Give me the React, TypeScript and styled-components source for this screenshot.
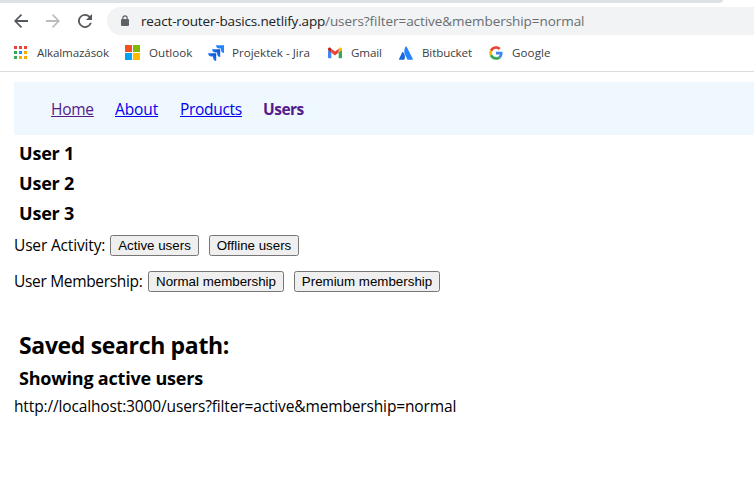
import React from 'react';
import styled, { createGlobalStyle } from 'styled-components';

const GlobalStyle = createGlobalStyle`
  *, *::before, *::after { box-sizing: border-box; }
  body { margin: 0; background: #fff; overflow: hidden; }
  h2, h3, p, ul { margin: 0; padding: 0; }
`;

const Window = styled.div`
  height: 484px;
  overflow: hidden;
  background: #fff;
  color: #000;
  font-family: "Segoe UI", "Open Sans", sans-serif;
`;

const TabStrip = styled.div`
  height: 3px;
  width: 723px;
  background: #dee1e6;
  border-bottom-right-radius: 4px 3px;
`;

const Toolbar = styled.div`
  display: flex;
  align-items: center;
  height: 36px;
  padding-left: 13px;
`;

const ToolIcon = styled.svg<{ $color: string }>`
  display: block;
  flex: none;
  width: 16px;
  height: 16px;
  margin-right: 16px;
  fill: ${p => p.$color};
`;

const AddressBar = styled.div`
  display: flex;
  align-items: center;
  flex: 1;
  height: 28px;
  margin-left: -2px;
  padding-left: 14px;
  border-radius: 14px 0 0 14px;
  background: #f1f3f4;
  font-size: 13.5px;
  line-height: 28px;
  white-space: nowrap;
`;

const Lock = styled.svg`
  width: 8px;
  height: 12px;
  margin-right: 12px;
  fill: #5f6368;
`;

const Host = styled.span`
  width: 184px;
  color: #202124;
  letter-spacing: -0.15px;
`;

const Path = styled.span`
  color: #6a6d71;
  letter-spacing: -0.06px;
`;

const Bookmarks = styled.div`
  display: flex;
  align-items: center;
  height: 33px;
  padding: 0 0 5px 13px;
  border-bottom: 1px solid #dadce0;
`;

const Bookmark = styled.div<{ $width: number; $spacing?: number }>`
  display: flex;
  align-items: center;
  flex: none;
  gap: 8px;
  width: ${p => p.$width}px;
  color: #3c4043;
  font-size: 11.6px;
  line-height: 18px;
  letter-spacing: ${p => p.$spacing ?? 0}px;
  white-space: nowrap;

  svg { display: block; flex: none; width: 16px; height: 16px; }
`;

const Page = styled.main`
  padding: 10px 0 0 14px;
  font-size: 15.5px;
  line-height: 22px;
`;

const Nav = styled.nav`
  display: flex;
  align-items: center;
  height: 53px;
  padding: 0 0 0 37px;
  background: #f0f8ff;
`;

const NavLink = styled.a<{ $width: number; $visited?: boolean; $active?: boolean; $spacing?: number }>`
  width: ${p => p.$width}px;
  color: ${p => (p.$visited ? '#551a8b' : '#0000ee')};
  font-weight: ${p => (p.$active ? 700 : 400)};
  letter-spacing: ${p => p.$spacing ?? 0}px;
  text-decoration: ${p => (p.$active ? 'none' : 'underline')};
  text-decoration-thickness: 1px;
  text-underline-offset: 1px;
  cursor: pointer;
`;

const UserList = styled.section`
  padding: 3px 0 0 5px;
`;

const Heading = styled.h3`
  height: 30px;
  font-size: 18px;
  font-weight: 700;
  line-height: 30px;
  letter-spacing: -0.2px;
`;

const Filters = styled.section`
  margin-top: -1px;
`;

const FilterRow = styled.div`
  display: flex;
  align-items: center;
  height: 36px;
`;

const FilterLabel = styled.span<{ $width: number; $spacing: number }>`
  width: ${p => p.$width}px;
  padding-bottom: 1px;
  letter-spacing: ${p => p.$spacing}px;
  white-space: nowrap;
`;

const FilterButton = styled.button<{ $width: number }>`
  width: ${p => p.$width}px;
  height: 21px;
  margin: 0 10px 0 0;
  padding: 0;
  border: 1px solid #767676;
  border-radius: 2.5px;
  background: #efefef;
  color: #000;
  font: 13.333px/19px "Liberation Sans", Arial, sans-serif;
  white-space: nowrap;
`;

const Saved = styled.section`
  padding-top: 29px;
`;

const SavedTitle = styled.h2`
  height: 35px;
  padding-left: 5px;
  font-size: 23px;
  font-weight: 700;
  line-height: 34px;
  letter-spacing: -0.34px;
`;

const SavedFilter = styled(Heading)`
  padding-left: 5px;
`;

const SavedPath = styled.p`
  line-height: 26px;
  letter-spacing: -0.14px;
`;

const dots = [
  ['#ea4335', '#ea4335', '#ea4335'],
  ['#34a853', '#1a90ff', '#fbab00'],
  ['#34a853', '#fbab00', '#fbab00'],
];

const AppsIcon = () => (
  <svg viewBox="0 0 16 16" shapeRendering="crispEdges">
    {dots.map((row, y) => row.map((c, x) => (
      <rect key={`${x}${y}`} x={1 + x * 5} y={1 + y * 5} width="3" height="3" fill={c} />
    )))}
  </svg>
);

const MicrosoftIcon = () => (
  <svg viewBox="0 0 16 16" shapeRendering="crispEdges">
    <path fill="#f25022" d="M0 0h7v7H0z" />
    <path fill="#7fba00" d="M8 0h7v7H8z" />
    <path fill="#00a4ef" d="M0 8h7v7H0z" />
    <path fill="#ffb900" d="M8 8h7v7H8z" />
  </svg>
);

const JiraIcon = () => (
  <svg viewBox="0 0 16 16">
    <defs>
      <linearGradient id="jira" x1="1" y1="0" x2="0" y2="1">
        <stop offset="0.2" stopColor="#0f5bd5" />
        <stop offset="0.75" stopColor="#2684ff" />
      </linearGradient>
    </defs>
    <path fill="url(#jira)" d="M0 8.200h8.200V16C6.300 15.800 5.100 14.600 5.100 13V11.500H3.400C1.600 11.500.2 10.200 0 8.200z" />
    <path fill="url(#jira)" d="M4 4.200h8.200V12C10.300 11.800 9.100 10.600 9.100 9V7.500H7.400C5.600 7.500 4.200 6.200 4 4.200z" />
    <path fill="#2684ff" d="M7.900.2H16V8C14.200 7.800 13 6.600 13 5V3.500H11.300C9.500 3.500 8.100 2.200 7.900.2z" />
  </svg>
);

const GmailIcon = () => (
  <svg viewBox="0 0 16 16">
    <path fill="#4285f4" d="M1 5v7.200c0 .7.500 1.100 1.100 1.100h2.200V6.900z" />
    <path fill="#34a853" d="M11.700 13.300h2.200c.7 0 1.100-.5 1.100-1.100V5l-3.300 2z" />
    <path fill="#fbbc04" d="M11.700 3.700v3.900L15 5.100V4c0-1.500-1.500-2-2.500-1.200z" />
    <path fill="#ea4335" d="M4.300 7.600V3.700L8 6.500l3.700-2.800v3.900L8 10.400z" />
    <path fill="#c5221f" d="M1 4v1.100l3.300 2.500V3.700l-.8-.9C2.500 2 1 2.500 1 4z" />
  </svg>
);

const AtlassianIcon = () => (
  <svg viewBox="0 0 16 16">
    <path fill="#1868db" d="M5.100 7.100c-.3-.3-.6-.2-.8.1L1 14c-.2.400 0 .7.400.7H6c.2 0 .4-.1.500-.3 1-2.100.4-5.300-1.400-7.300z" />
    <path fill="#2684ff" d="M7.700 1.500c-2 3.100-1.700 6.100-.5 8.600l2.200 4.300c.1.200.3.300.5.300h4.600c.4 0 .6-.4.4-.7L8.500 1.500c-.2-.4-.6-.4-.8 0z" />
  </svg>
);

const GoogleIcon = () => (
  <svg viewBox="-4 -4 56 56">
    <path fill="#EA4335" d="M24 9.500c3.540 0 6.710 1.220 9.210 3.600l6.850-6.850C35.900 2.380 30.470 0 24 0 14.620 0 6.510 5.380 2.560 13.220l7.980 6.190C12.430 13.720 17.740 9.500 24 9.500z" />
    <path fill="#4285F4" d="M46.980 24.550c0-1.570-.15-3.090-.38-4.550H24v9.020h12.940c-.58 2.960-2.260 5.480-4.780 7.180l7.730 6c4.510-4.180 7.090-10.360 7.090-17.650z" />
    <path fill="#FBBC05" d="M10.530 28.590A14.5 14.5 0 0 1 9.770 24c0-1.600.27-3.140.76-4.590l-7.980-6.190A23.900 23.900 0 0 0 0 24c0 3.880.92 7.540 2.560 10.780z" />
    <path fill="#34A853" d="M24 48c6.480 0 11.930-2.130 15.890-5.810l-7.730-6c-2.150 1.450-4.920 2.300-8.160 2.300-6.260 0-11.570-4.220-13.470-9.910l-7.980 6.190C6.510 42.620 14.620 48 24 48z" />
  </svg>
);

export default function App() {
  return (
    <Window>
      <GlobalStyle />
      <TabStrip />
      <Toolbar>
        <ToolIcon viewBox="0 0 16 16" $color="#54585d">
          <path d="M15 7.100H4.200l4.900-4.900L7.900 1 1 8l6.900 7 1.200-1.200-4.900-4.900H15z" />
        </ToolIcon>
        <ToolIcon viewBox="0 0 16 16" $color="#babcbe">
          <path d="M1 7.100h10.800L6.900 2.200 8.100 1 15 8l-6.900 7-1.200-1.200 4.900-4.900H1z" />
        </ToolIcon>
        <ToolIcon viewBox="0 0 16 16" $color="#54585d">
          <path d="M12.950 3.050A7 7 0 1 0 14.780 9.750H12.900A5.200 5.200 0 1 1 11.700 4.300L9 7h6V1z" />
        </ToolIcon>
        <AddressBar>
          <Lock viewBox="0 0 8 12">
            <path fillRule="evenodd" d="M1.300 4V2.900a2.700 2.700 0 0 1 5.400 0V4H7a1 1 0 0 1 1 1v5a1 1 0 0 1-1 1H1a1 1 0 0 1-1-1V5a1 1 0 0 1 1-1zm1.200 0h3V2.900a1.500 1.500 0 0 0-3 0z" />
          </Lock>
          <Host>react-router-basics.netlify.app</Host>
          <Path>/users?filter=active&amp;membership=normal</Path>
        </AddressBar>
      </Toolbar>
      <Bookmarks>
        <Bookmark $width={112} $spacing={-0.12}><AppsIcon />Alkalmazások</Bookmark>
        <Bookmark $width={83}><MicrosoftIcon />Outlook</Bookmark>
        <Bookmark $width={119}><JiraIcon />Projektek - Jira</Bookmark>
        <Bookmark $width={71} $spacing={-0.12}><GmailIcon />Gmail</Bookmark>
        <Bookmark $width={90} $spacing={-0.12}><AtlassianIcon />Bitbucket</Bookmark>
        <Bookmark $width={70} $spacing={0.1}><GoogleIcon />Google</Bookmark>
      </Bookmarks>
      <Page>
        <Nav>
          <NavLink $width={64} $visited $spacing={-0.25}>Home</NavLink>
          <NavLink $width={65} $spacing={-0.1}>About</NavLink>
          <NavLink $width={83} $spacing={-0.3}>Products</NavLink>
          <NavLink $width={60} $visited $active $spacing={-0.5}>Users</NavLink>
        </Nav>
        <UserList>
          <Heading>User 1</Heading>
          <Heading>User 2</Heading>
          <Heading>User 3</Heading>
        </UserList>
        <Filters>
          <FilterRow>
            <FilterLabel $width={96} $spacing={-0.16}>User Activity:</FilterLabel>
            <FilterButton $width={89}>Active users</FilterButton>
            <FilterButton $width={90}>Offline users</FilterButton>
          </FilterRow>
          <FilterRow>
            <FilterLabel $width={134} $spacing={-0.32}>User Membership:</FilterLabel>
            <FilterButton $width={136}>Normal membership</FilterButton>
            <FilterButton $width={146}>Premium membership</FilterButton>
          </FilterRow>
        </Filters>
        <Saved>
          <SavedTitle>Saved search path:</SavedTitle>
          <SavedFilter>Showing active users</SavedFilter>
          <SavedPath>http://localhost:3000/users?filter=active&amp;membership=normal</SavedPath>
        </Saved>
      </Page>
    </Window>
  );
}
